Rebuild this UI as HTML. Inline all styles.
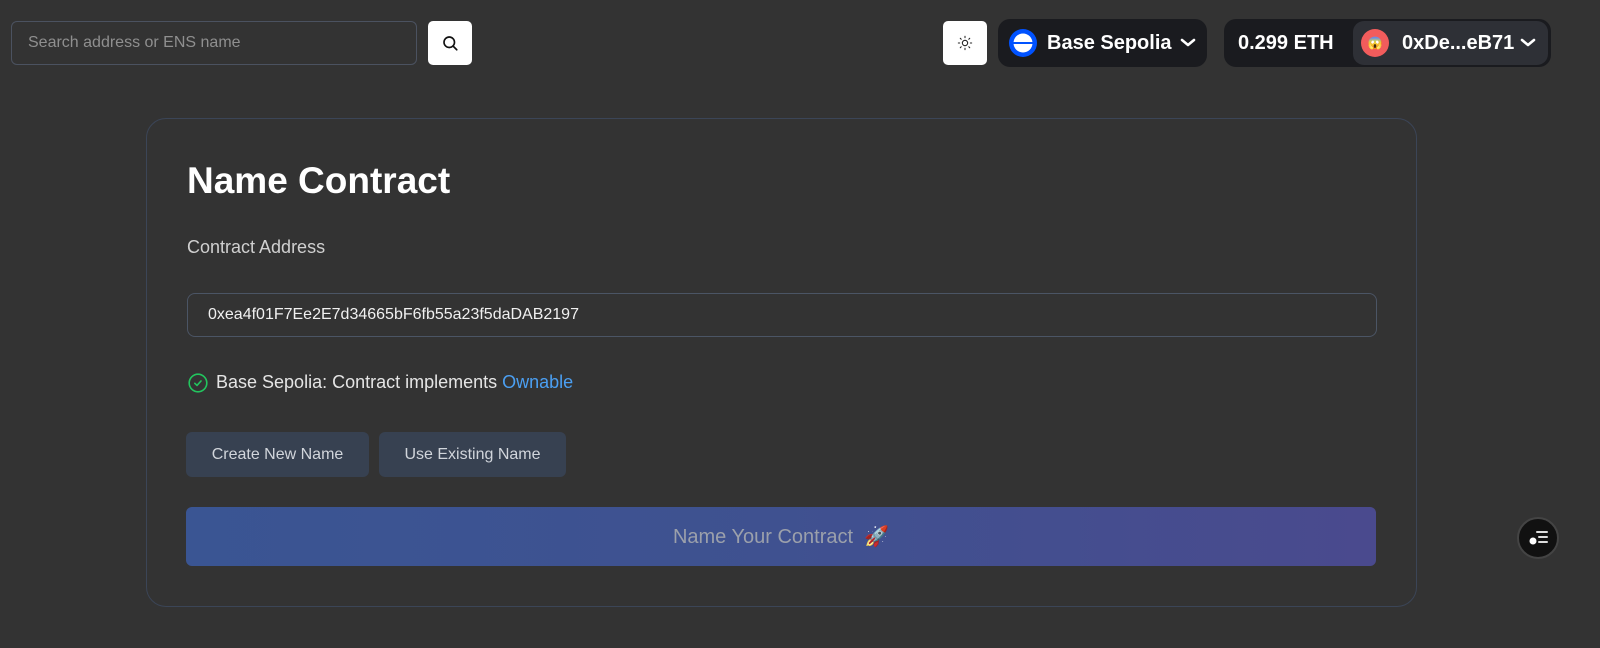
<!DOCTYPE html>
<html><head><style>
*{box-sizing:border-box;margin:0;padding:0}
body{width:1600px;height:648px;background:#333333;font-family:"Liberation Sans",Arial,sans-serif;position:relative;overflow:hidden;color:#fff}
.abs{position:absolute}
.search{left:11px;top:21px;width:406px;height:44px;border:1px solid #4b5260;border-radius:6px;color:#8f8f8f;font-size:16px;padding:12px 16px}
.sbtn{left:428px;top:21px;width:44px;height:44px;background:#fff;border-radius:5px;display:flex;align-items:center;justify-content:center}
.theme{left:943px;top:21px;width:44px;height:44px;background:#fff;border-radius:5px;display:flex;align-items:center;justify-content:center}
.net{left:998px;top:19px;width:209px;height:48px;background:#1a1b1f;border-radius:12px;display:flex;align-items:center;padding-left:11px;font-weight:bold;font-size:20px}
.bal{left:1224px;top:19px;width:327px;height:48px;background:#1a1b1f;border-radius:12px;font-weight:bold;font-size:20px}
.acct{left:129px;top:2px;width:195px;height:44px;background:#2e3036;border-radius:11px;display:flex;align-items:center;padding-left:8px}
.card{left:146px;top:118px;width:1271px;height:489px;border:1px solid #3b4557;border-radius:20px}
.btn{top:432px;height:45px;background:#374151;border-radius:6px;color:#d1d5db;font-size:16px;display:flex;align-items:center;justify-content:center}
</style></head><body>
<div class="abs search">Search address or ENS name</div>
<div class="abs sbtn"><svg width="18" height="18" viewBox="0 0 24 24" fill="none" stroke="#111" stroke-width="2.2" stroke-linecap="round"><circle cx="11" cy="11" r="7"/><path d="M16 16l5 5"/></svg></div>
<div class="abs theme"><svg width="16" height="16" viewBox="0 0 24 24" fill="none" stroke="#222" stroke-width="1.6" stroke-linecap="round"><circle cx="12" cy="12" r="4"/><path d="M12 2v2M12 20v2M2 12h2M20 12h2M4.9 4.9l1.4 1.4M17.7 17.7l1.4 1.4M4.9 19.1l1.4-1.4M17.7 6.3l1.4-1.4"/></svg></div>
<div class="abs net"><svg width="28" height="28" viewBox="0 0 28 28" style="margin-right:10px"><circle cx="14" cy="14" r="14" fill="#0052ff"/><circle cx="14" cy="14" r="9.5" fill="#fff"/><rect x="4.5" y="13" width="19" height="2" fill="#0052ff"/></svg>Base Sepolia<svg width="16" height="10" viewBox="0 0 16 10" style="margin-left:8px" fill="none" stroke="#fff" stroke-width="2.6" stroke-linecap="round" stroke-linejoin="round"><path d="M2 2l6 5 6-5"/></svg></div>
<div class="abs bal"><div class="abs" style="left:14px;top:13px">0.299 ETH</div>
<div class="abs acct"><div style="width:28px;height:28px;border-radius:50%;background:#f25c5c;margin-right:13px;display:flex;align-items:center;justify-content:center;font-size:12px">😱</div>0xDe...eB71<svg width="16" height="10" viewBox="0 0 16 10" style="margin-left:6px" fill="none" stroke="#fff" stroke-width="2.6" stroke-linecap="round" stroke-linejoin="round"><path d="M2 2l6 5 6-5"/></svg></div></div>

<div class="abs card"></div>
<div class="abs" style="left:187px;top:160px;font-size:37px;font-weight:bold">Name Contract</div>
<div class="abs" style="left:187px;top:237px;font-size:18px;color:#d0d0d0">Contract Address</div>
<div class="abs" style="left:187px;top:293px;width:1190px;height:44px;border:1px solid #4b5565;border-radius:8px;font-size:16px;padding:12px 20px;color:#f0f0f0">0xea4f01F7Ee2E7d34665bF6fb55a23f5daDAB2197</div>
<div class="abs" style="left:188px;top:372px;display:flex;align-items:center;font-size:18px;color:#e5e5e5"><svg width="20" height="20" viewBox="0 0 20 20" fill="none" stroke="#22c55e" stroke-width="1.6" stroke-linecap="round" stroke-linejoin="round" style="margin-right:8px"><circle cx="10" cy="10" r="8.8"/><path d="M6.8 10.3l2.2 2.1 4-4.4"/></svg>Base Sepolia: Contract implements&nbsp;<span style="color:#4b9ff2">Ownable</span></div>
<div class="abs btn" style="left:186px;width:183px">Create New Name</div>
<div class="abs btn" style="left:379px;width:187px">Use Existing Name</div>
<div class="abs" style="left:186px;top:507px;width:1190px;height:59px;border-radius:6px;background:linear-gradient(90deg,#3a5593,#3f5190 50%,#4a4a8e);display:flex;align-items:center;justify-content:center;font-size:20px;color:#9ba0ab">Name Your Contract&nbsp;&nbsp;🚀</div>
<div class="abs" style="left:1517px;top:517px;width:42px;height:42px;border-radius:50%;background:#111;border:2px solid #444;">
<svg width="38" height="38" viewBox="0 0 38 38" fill="none" stroke="#ddd" stroke-width="2" stroke-linecap="round"><path d="M18 13h10M20 18h8M20 23h8"/><circle cx="14" cy="22" r="3.5" fill="#fff" stroke="none"/></svg></div>
</body></html>
